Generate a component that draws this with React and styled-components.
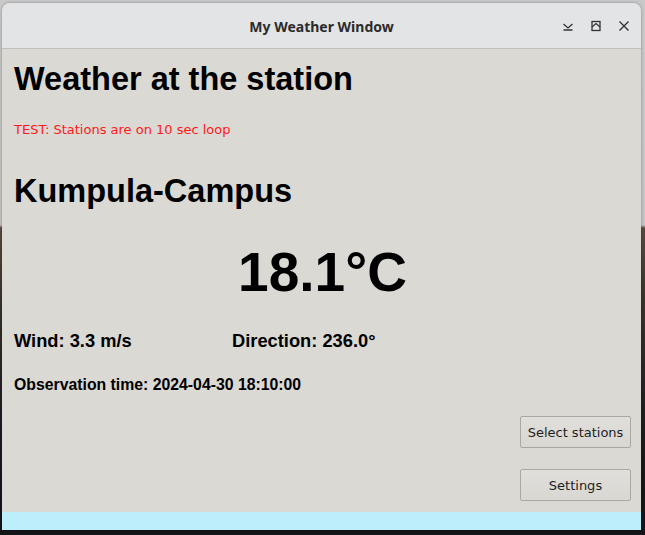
import styled, { createGlobalStyle } from "styled-components"

const GlobalStyle = createGlobalStyle`
  html, body {
    margin: 0;
    padding: 0;
    width: 645px;
    height: 535px;
    overflow: hidden;
  }
  body {
    background: linear-gradient(180deg, #c9c9c9 0px, #c4c4c4 225px, #5a4a3c 228px, #3b332c 300px, #1f1d22 420px, #141318 535px);
  }
`

const Desktop = styled.div`
  width: 645px;
  height: 535px;
  padding: 3px 4px 5px 2px;
  box-sizing: border-box;
  display: flex;
`
const Window = styled.div`
  flex: 1;
  display: flex;
  flex-direction: column;
  border-radius: 8px 8px 0 0;
  overflow: hidden;
  background-color: #dbd9d4;
  box-shadow: 0 0 3px rgba(0, 0, 0, 0.35);
`
const TitleBar = styled.div`
  height: 46px;
  flex: none;
  display: flex;
  align-items: center;
  justify-content: center;
  position: relative;
  background-color: #e3e4e6;
  border-bottom: 1px solid #bfbfbf;
  font-family: "Noto Sans", "DejaVu Sans", sans-serif;
  font-weight: 700;
  font-size: 14px;
  color: #2b2b2b;
  padding-top: 2px;
  box-sizing: border-box;
`
const TitleControls = styled.div`
  position: absolute;
  right: 10px;
  top: 0;
  bottom: 0;
  display: flex;
  align-items: center;
  gap: 14px;
`
const ControlIcon = styled.svg`
  width: 14px;
  height: 14px;
  display: block;
`
const Content = styled.div`
  flex: 1;
  display: flex;
  flex-direction: column;
  padding: 12px 10px 0 12px;
  font-family: "Liberation Sans", Arial, sans-serif;
  color: #000;
`
const Heading = styled.div`
  font-size: 32.5px;
  font-weight: 700;
  line-height: 37px;
  margin-top: ${(props) => props.top || 0}px;
`
const Notice = styled.div`
  font-family: "DejaVu Sans", sans-serif;
  font-size: 13px;
  color: #ff1a1a;
  margin-top: 24px;
`
const Temperature = styled.div`
  font-size: 55px;
  font-weight: 700;
  text-align: center;
  line-height: 64px;
  margin-top: 30px;
`
const WindRow = styled.div`
  display: flex;
  font-size: 18.3px;
  font-weight: 700;
  margin-top: 26px;
`
const WindCell = styled.div`
  width: 218px;
`
const ObsTime = styled.div`
  font-size: 15.8px;
  font-weight: 700;
  margin-top: 24px;
`
const ButtonColumn = styled.div`
  display: flex;
  flex-direction: column;
  align-items: flex-end;
  gap: 21px;
  margin-top: 22px;
`
const Button = styled.div`
  width: 111px;
  height: 32px;
  box-sizing: border-box;
  display: flex;
  align-items: center;
  justify-content: center;
  border: 1px solid #a9a8a5;
  border-radius: 2px;
  background: linear-gradient(180deg, #e0dfdb, #d9d7d2);
  font-family: "DejaVu Sans", sans-serif;
  font-size: 13px;
  color: #1e1e1e;
`
const BottomBar = styled.div`
  height: 18px;
  flex: none;
  margin-top: auto;
  background-color: #bdeefb;
`

const App = () => {
  return (
    <Desktop>
      <GlobalStyle />
      <Window>
        <TitleBar>
          My Weather Window
          <TitleControls>
            <ControlIcon viewBox="0 0 14 14">
              <path d="M2.5 5 L7 9 L11.5 5" fill="none" stroke="#333" strokeWidth="1.3" />
              <path d="M2.5 11 H11.5" stroke="#333" strokeWidth="1.3" />
            </ControlIcon>
            <ControlIcon viewBox="0 0 14 14">
              <rect x="3" y="2.5" width="8" height="9" fill="none" stroke="#333" strokeWidth="1.3" />
              <path d="M3 8 L7 4.5 L11 8" fill="none" stroke="#333" strokeWidth="1.2" />
            </ControlIcon>
            <ControlIcon viewBox="0 0 14 14">
              <path d="M2.5 2.5 L11.5 11.5 M11.5 2.5 L2.5 11.5" stroke="#333" strokeWidth="1.4" />
            </ControlIcon>
          </TitleControls>
        </TitleBar>
        <Content>
          <Heading>Weather at the station</Heading>
          <Notice>TEST: Stations are on 10 sec loop</Notice>
          <Heading top={36}>Kumpula-Campus</Heading>
          <Temperature>18.1°C</Temperature>
          <WindRow>
            <WindCell>Wind: 3.3 m/s</WindCell>
            <WindCell>Direction: 236.0°</WindCell>
          </WindRow>
          <ObsTime>Observation time: 2024-04-30 18:10:00</ObsTime>
          <ButtonColumn>
            <Button>Select stations</Button>
            <Button>Settings</Button>
          </ButtonColumn>
        </Content>
        <BottomBar />
      </Window>
    </Desktop>
  )
}

export default App
